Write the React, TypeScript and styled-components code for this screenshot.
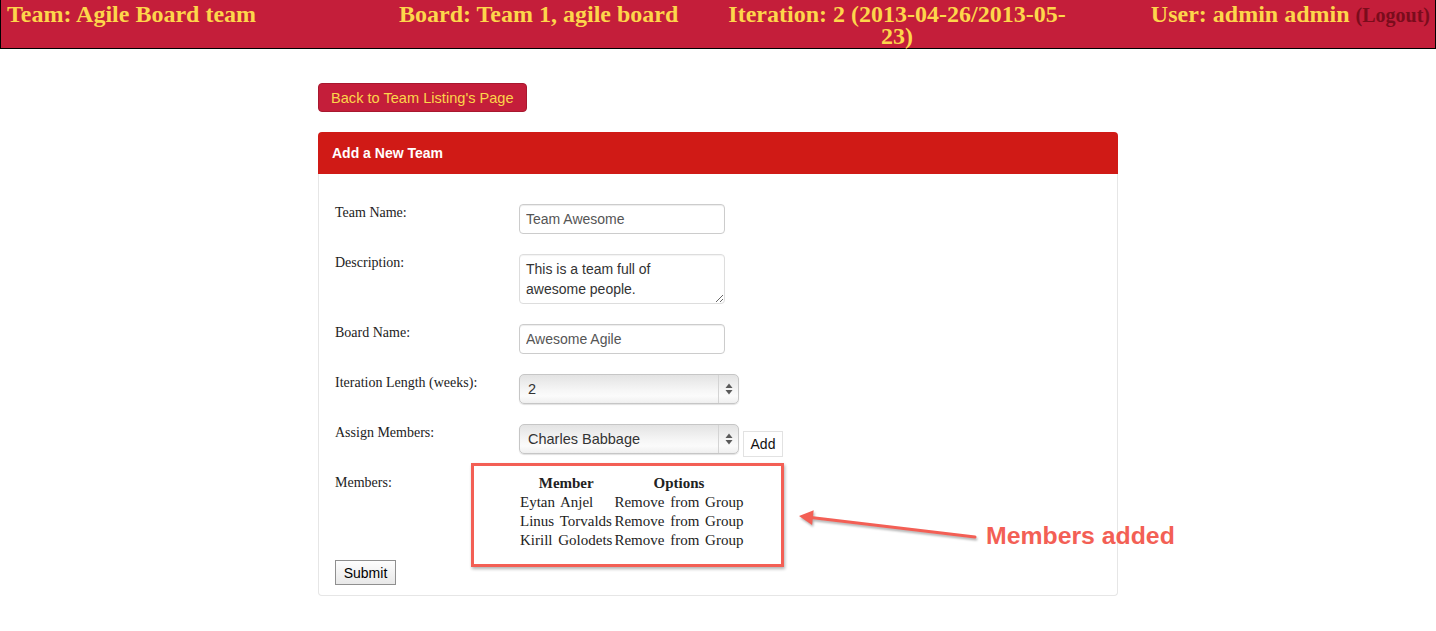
import React from "react";
import styled, { createGlobalStyle } from "styled-components";

const GlobalStyle = createGlobalStyle`
  html, body { margin: 0; padding: 0; background: #fff; }
  body { font-family: "Liberation Serif", "Times New Roman", serif; }
`;

const TopBar = styled.header`
  box-sizing: border-box;
  height: 49px;
  display: grid;
  grid-template-columns: 392px 325px 346px 1fr;
  padding: 3px 5px 0 6px;
  background: #c41e3a;
  border: 1px solid #000;
  border-top: none;
  color: #fdd64b;
  font: bold 24px/22px "Liberation Serif", "Times New Roman", serif;
`;

const TopItem = styled.div<{ $align?: "left" | "center" | "right" }>`
  text-align: ${(p) => p.$align || "left"};
  white-space: nowrap;
`;

const Logout = styled.a`
  font-size: 20px;
  color: #7a0c1c;
  text-decoration: none;
`;

const Page = styled.main`
  position: relative;
  width: 800px;
  margin: 34px auto 0;
`;

const BackButton = styled.button`
  display: block;
  height: 29px;
  padding: 0 12px;
  background: #c41e3a;
  border: 1px solid #a8182f;
  border-radius: 4px;
  color: #fcd54b;
  font: 14.6px "Liberation Sans", Arial, sans-serif;
`;

const Panel = styled.section`
  margin-top: 20px;
`;

const PanelHeading = styled.div`
  height: 42px;
  padding-left: 14px;
  background: #d01a16;
  border-radius: 4px 4px 0 0;
  color: #fff;
  font: bold 14px/42px "Liberation Sans", Arial, sans-serif;
`;

const PanelBody = styled.div`
  border: 1px solid #e6e6e6;
  border-top: none;
  border-radius: 0 0 4px 4px;
  padding: 30px 16px 10px;
`;

const FormGrid = styled.div`
  display: grid;
  grid-template-columns: 184px 1fr;
  row-gap: 20px;
`;

const Label = styled.label`
  font: 14px/18px "Liberation Serif", "Times New Roman", serif;
  color: #222;
`;

const Field = styled.div`
  display: flex;
  align-items: flex-start;
  gap: 4px;
`;

const TextInput = styled.input`
  box-sizing: border-box;
  width: 206px;
  height: 30px;
  padding: 0 6px;
  border: 1px solid #ccc;
  border-radius: 4px;
  box-shadow: inset 0 1px 1px rgba(0, 0, 0, 0.075);
  font: 14px "Liberation Sans", Arial, sans-serif;
  color: #555;
  outline: none;
`;

const TextArea = styled.textarea`
  box-sizing: border-box;
  width: 206px;
  height: 50px;
  padding: 4px 6px;
  border: 1px solid #ddd;
  border-radius: 4px;
  box-shadow: inset 0 1px 1px rgba(0, 0, 0, 0.05);
  font: 14px/20px "Liberation Sans", Arial, sans-serif;
  color: #333;
  outline: none;
  overflow: hidden;
`;

const SelectWrap = styled.div`
  position: relative;
  width: 220px;
  height: 30px;
`;

const Select = styled.select`
  appearance: none;
  -webkit-appearance: none;
  box-sizing: border-box;
  width: 100%;
  height: 100%;
  padding: 0 28px 0 8px;
  border: 1px solid #c6c6c6;
  border-radius: 5px;
  background: linear-gradient(#e3e3e3, #f6f6f6 55%, #fbfbfb 75%, #efefef);
  box-shadow: 0 1px 1px rgba(0, 0, 0, 0.12);
  font: 14.5px "Liberation Sans", Arial, sans-serif;
  color: #333;
  outline: none;
`;

const Stepper = styled.span`
  position: absolute;
  top: 1px;
  right: 1px;
  bottom: 1px;
  width: 19px;
  border-left: 1px solid #d4d4d4;
  display: flex;
  align-items: center;
  justify-content: center;
  pointer-events: none;
`;

const AddButton = styled.button`
  box-sizing: border-box;
  width: 40px;
  height: 26px;
  margin: 7px 0 -3px;
  padding: 0;
  background: #fff;
  border: 1px solid #e2e2e2;
  font: 14px "Liberation Sans", Arial, sans-serif;
  color: #111;
`;

const MembersTable = styled.table`
  border-collapse: collapse;
  font: 15px/19px "Liberation Serif", "Times New Roman", serif;
  word-spacing: 2px;
  color: #222;
  th, td {
    padding: 0 1px;
    white-space: nowrap;
  }
  th {
    font-weight: bold;
    text-align: center;
  }
  td {
    text-align: left;
  }
`;

const SubmitButton = styled.button`
  display: block;
  box-sizing: border-box;
  width: 61px;
  height: 25px;
  margin-top: 10px;
  padding: 0;
  background: linear-gradient(#fdfdfd, #e8e8e8);
  border: 1px solid #8f8f8f;
  font: 14px "Liberation Sans", Arial, sans-serif;
  color: #000;
`;

const HighlightBox = styled.div`
  position: absolute;
  left: 153px;
  top: 380px;
  width: 313px;
  height: 104px;
  box-sizing: border-box;
  border: 3px solid #f35f55;
  box-shadow: 1px 2px 3px rgba(0, 0, 0, 0.3);
  pointer-events: none;
`;

const ArrowSvg = styled.svg`
  position: absolute;
  left: 477px;
  top: 422px;
  overflow: visible;
  filter: drop-shadow(1px 2px 1px rgba(0, 0, 0, 0.3));
  pointer-events: none;
`;

const Callout = styled.div`
  position: absolute;
  left: 668px;
  top: 439px;
  font: bold 24.8px/28px "Liberation Sans", Arial, sans-serif;
  color: #f35f55;
  white-space: nowrap;
`;

const StepperIcon = () => (
  <svg width="8" height="12" viewBox="0 0 8 12">
    <polygon points="4,0.5 7.5,5 0.5,5" fill="#5a5a5a" />
    <polygon points="0.5,7 7.5,7 4,11.5" fill="#5a5a5a" />
  </svg>
);

const SelectBox = ({ value, options }: { value: string; options: string[] }) => (
  <SelectWrap>
    <Select defaultValue={value}>
      {options.map((o) => (
        <option key={o}>{o}</option>
      ))}
    </Select>
    <Stepper>
      <StepperIcon />
    </Stepper>
  </SelectWrap>
);

const members = [
  ["Eytan", "Anjel"],
  ["Linus", "Torvalds"],
  ["Kirill", "Golodets"],
];

export default function App() {
  return (
    <>
      <GlobalStyle />
      <TopBar>
        <TopItem>Team: Agile Board team</TopItem>
        <TopItem>Board: Team 1, agile board</TopItem>
        <TopItem $align="center">
          Iteration: 2 (2013-04-26/2013-05-
          <br />
          23)
        </TopItem>
        <TopItem $align="right">
          User: admin admin <Logout href="#">(Logout)</Logout>
        </TopItem>
      </TopBar>
      <Page>
        <BackButton>Back to Team Listing's Page</BackButton>
        <Panel>
          <PanelHeading>Add a New Team</PanelHeading>
          <PanelBody>
            <FormGrid>
              <Label>Team Name:</Label>
              <Field>
                <TextInput defaultValue="Team Awesome" />
              </Field>
              <Label>Description:</Label>
              <Field>
                <TextArea defaultValue={"This is a team full of\nawesome people."} />
              </Field>
              <Label>Board Name:</Label>
              <Field>
                <TextInput defaultValue="Awesome Agile" />
              </Field>
              <Label>Iteration Length (weeks):</Label>
              <Field>
                <SelectBox value="2" options={["1", "2", "3", "4"]} />
              </Field>
              <Label>Assign Members:</Label>
              <Field>
                <SelectBox value="Charles Babbage" options={["Charles Babbage", "Ada Lovelace"]} />
                <AddButton>Add</AddButton>
              </Field>
              <Label>Members:</Label>
              <Field>
                <MembersTable>
                  <thead>
                    <tr>
                      <th>Member</th>
                      <th>Options</th>
                    </tr>
                  </thead>
                  <tbody>
                    {members.map(([first, last]) => (
                      <tr key={first}>
                        <td>
                          {first} {last}
                        </td>
                        <td>Remove from Group</td>
                      </tr>
                    ))}
                  </tbody>
                </MembersTable>
              </Field>
            </FormGrid>
            <SubmitButton>Submit</SubmitButton>
          </PanelBody>
        </Panel>
        <HighlightBox />
        <ArrowSvg width="185" height="40" viewBox="0 0 185 40">
          <line x1="16" y1="12.4" x2="180" y2="32" stroke="#f35f55" strokeWidth="3" strokeLinecap="round" />
          <polygon points="4,11 18.7,5.2 17.1,20" fill="#f35f55" />
        </ArrowSvg>
        <Callout>Members added</Callout>
      </Page>
    </>
  );
}
